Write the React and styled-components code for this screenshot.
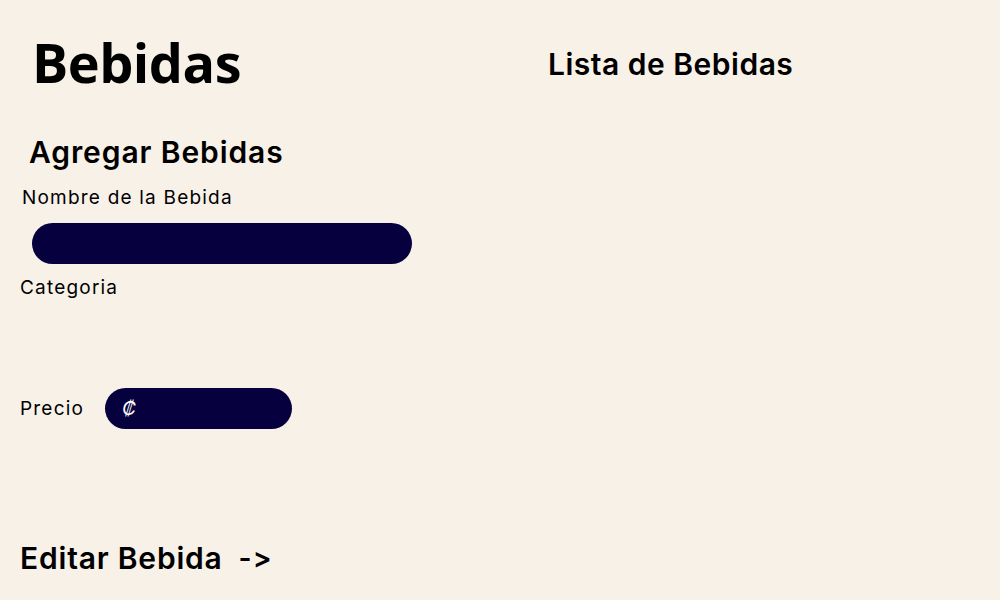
import React from 'react';
import styled, { createGlobalStyle } from 'styled-components';

const GlobalStyle = createGlobalStyle`
  html, body {
    margin: 0;
    padding: 0;
    background: #f8f1e8;
  }
  body {
    font-family: 'Inter', 'Liberation Sans', sans-serif;
    font-feature-settings: 'calt' 0, 'liga' 0;
    color: #000;
  }
`;

const Page = styled.div`
  width: 1000px;
  height: 600px;
  display: grid;
  grid-template-columns: 548px 1fr;
  background: #f8f1e8;
  overflow: hidden;
`;

const FormColumn = styled.section`
  display: flex;
  flex-direction: column;
  padding: 22px 0 0 20px;
`;

const ListColumn = styled.section`
  padding-top: 44px;
`;

const PageTitle = styled.h1`
  margin: 0 0 0 12px;
  font-family: 'Open Sans', 'Noto Sans', sans-serif;
  font-weight: 700;
  font-size: 54px;
  line-height: 80px;
  letter-spacing: -0.5px;
`;

const SectionTitle = styled.h2`
  margin: ${(p) => p.$margin || '0'};
  font-family: 'Inter', sans-serif;
  font-weight: 600;
  font-size: 30px;
  line-height: 40px;
  letter-spacing: ${(p) => p.$spacing || '0.9px'};
  font-feature-settings: 'calt' 0;
`;

const Label = styled.label`
  display: block;
  margin: ${(p) => p.$margin || '0'};
  font-family: 'Inter', sans-serif;
  font-size: 19px;
  line-height: 24px;
  font-weight: 400;
  letter-spacing: 1.2px;
`;

const InputWrap = styled.div`
  margin: 13px 0 0 12px;
`;

const TextInput = styled.input`
  display: block;
  box-sizing: border-box;
  width: ${(p) => p.$width}px;
  height: 41px;
  border: none;
  border-radius: 21px;
  background: #06003e;
  color: #fff;
  padding: 0 18px;
  font-family: 'Inter', sans-serif;
  font-size: 18px;
  outline: none;
`;

const PriceRow = styled.div`
  display: flex;
  align-items: center;
  gap: 21px;
  margin-top: 88px;
`;

const PriceField = styled.div`
  display: flex;
  align-items: center;
  width: 187px;
  height: 41px;
  box-sizing: border-box;
  border-radius: 21px;
  background: #06003e;
  padding-left: 17px;
  color: #fff;
  font-family: 'Inter', sans-serif;
  font-size: 19px;
  font-style: italic;
`;

const EditLink = styled.a`
  display: flex;
  align-items: center;
  gap: 16px;
  margin-top: auto;
  margin-bottom: 22px;
  color: #000;
  text-decoration: none;
  font-family: 'Inter', sans-serif;
  font-weight: 600;
  font-size: 30px;
  line-height: 40px;
  letter-spacing: 0.8px;
  font-feature-settings: 'calt' 0;
`;

const Arrow = styled.span`
  font-size: 28px;
  letter-spacing: 1px;
  font-feature-settings: 'calt' 0;
`;

export default function App() {
  return (
    <>
      <GlobalStyle />
      <Page>
        <FormColumn>
          <PageTitle>Bebidas</PageTitle>
          <SectionTitle $margin="30px 0 0 9px">Agregar Bebidas</SectionTitle>
          <Label $margin="14px 0 0 2px">Nombre de la Bebida</Label>
          <InputWrap>
            <TextInput $width={380} />
          </InputWrap>
          <Label $margin="12px 0 0 0">Categoria</Label>
          <PriceRow>
            <Label>Precio</Label>
            <PriceField>₡</PriceField>
          </PriceRow>
          <EditLink href="#">
            Editar Bebida <Arrow>-&gt;</Arrow>
          </EditLink>
        </FormColumn>
        <ListColumn>
          <SectionTitle $spacing="0.5px">Lista de Bebidas</SectionTitle>
        </ListColumn>
      </Page>
    </>
  );
}
